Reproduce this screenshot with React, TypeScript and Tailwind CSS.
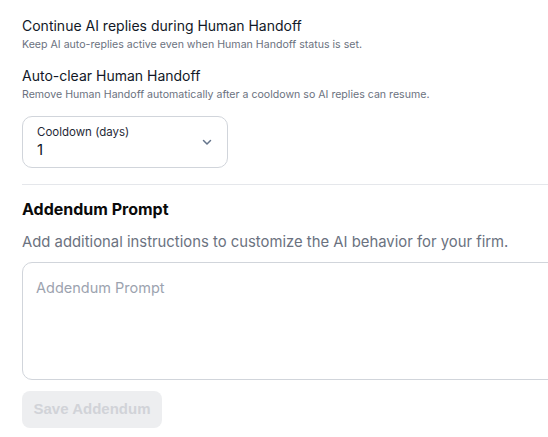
import * as React from "react";

function ChevronDown({ className }: { className?: string }) {
  return (
    <svg className={className} viewBox="0 0 16 16" fill="none" stroke="currentColor" strokeWidth="1.5" strokeLinecap="round" strokeLinejoin="round" aria-hidden>
      <path d="M4.5 6.5l3.5 3.5 3.5-3.5" />
    </svg>
  );
}

function SettingRow({ title, description }: { title: string; description: string }) {
  return (
    <div className="flex flex-col">
      <div className="text-[14px] leading-[20px] text-[#111827]">{title}</div>
      <div className="mt-[2px] text-[10.6px] leading-[14px] text-[#6b7280]">{description}</div>
    </div>
  );
}

export default function App() {
  return (
    <div className="h-[437px] w-[548px] overflow-hidden bg-white" style={{ fontFamily: "Inter, 'Noto Sans', sans-serif" }}>
      <div className="w-[620px] pl-[22px] pt-[16px]">
        <div className="flex flex-col gap-[14px]">
          <SettingRow
            title="Continue AI replies during Human Handoff"
            description="Keep AI auto-replies active even when Human Handoff status is set."
          />
          <SettingRow
            title="Auto-clear Human Handoff"
            description="Remove Human Handoff automatically after a cooldown so AI replies can resume."
          />
        </div>

        <button
          type="button"
          className="mt-[14px] flex h-[52px] w-[206px] items-center justify-between rounded-[10px] border border-[#d1d5db] pl-[14px] pr-[12px] text-left"
        >
          <div className="flex flex-col">
            <span className="text-[11.5px] leading-[15px] text-[#1f2937]">Cooldown (days)</span>
            <span className="text-[15px] leading-[19px] text-[#111827]">1</span>
          </div>
          <ChevronDown className="h-[16px] w-[16px] text-[#64748b]" />
        </button>

        <div className="mt-[16px] h-px w-full bg-[#e5e7eb]" />

        <h2 className="mt-[14px] text-[16px] font-bold leading-[20px] text-[#0a0a0a]">Addendum Prompt</h2>
        <p className="mt-[13px] text-[14.85px] leading-[20px] text-[#6b7280]">
          Add additional instructions to customize the AI behavior for your firm.
        </p>

        <textarea
          placeholder="Addendum Prompt"
          className="mt-[10px] block h-[118px] w-full resize-none rounded-[10px] border border-[#d1d5db] px-[13px] py-[15px] text-[14.5px] leading-[20px] text-[#111827] outline-none placeholder:text-[#9ca3af]"
        />

        <button
          type="button"
          disabled
          className="mt-[11px] h-[37px] w-[140px] rounded-[8px] bg-[#edeef0] text-[15px] font-bold text-[#d1d3d8]"
          style={{ fontFamily: "'Liberation Sans', Arial, sans-serif" }}
        >
          Save Addendum
        </button>
      </div>
    </div>
  );
}
